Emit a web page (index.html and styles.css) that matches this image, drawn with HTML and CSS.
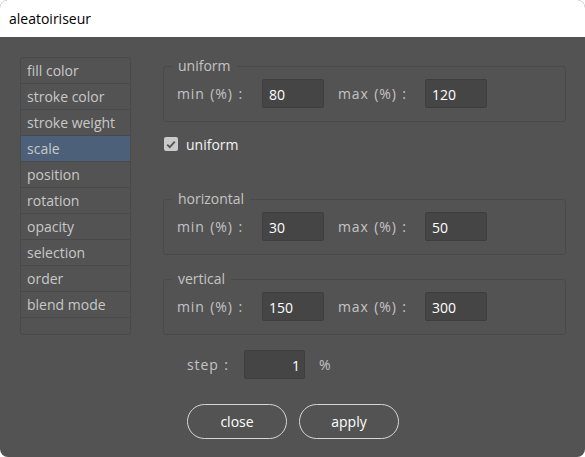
FILE: index.html
```html
<!DOCTYPE html>
<html>
<head>
<meta charset="utf-8">
<link rel="stylesheet" href="styles.css">
</head>
<body>
<div class="window">
  <div class="titlebar">aleatoiriseur</div>
  <div class="content">
    <div class="list">
      <div class="item">fill color</div>
      <div class="item">stroke color</div>
      <div class="item">stroke weight</div>
      <div class="item selected">scale</div>
      <div class="item">position</div>
      <div class="item">rotation</div>
      <div class="item">opacity</div>
      <div class="item">selection</div>
      <div class="item">order</div>
      <div class="item">blend mode</div>
    </div>
    <div class="panel">
      <fieldset class="group">
        <legend>uniform</legend>
        <div class="row">
          <span class="lbl lbl-min">min (%) :</span>
          <input class="field" type="text" value="80">
          <span class="lbl lbl-max">max (%) :</span>
          <input class="field" type="text" value="120">
        </div>
      </fieldset>
      <label class="check-row">
        <span class="checkbox"><svg width="10" height="9" viewBox="0 0 10 9"><path d="M1.2 4.6 L3.8 7.2 L8.8 1.6" fill="none" stroke="#555" stroke-width="1.8"/></svg></span>
        <span class="check-lbl">uniform</span>
      </label>
      <fieldset class="group group-h">
        <legend>horizontal</legend>
        <div class="row">
          <span class="lbl lbl-min">min (%) :</span>
          <input class="field" type="text" value="30">
          <span class="lbl lbl-max">max (%) :</span>
          <input class="field" type="text" value="50">
        </div>
      </fieldset>
      <fieldset class="group group-v">
        <legend>vertical</legend>
        <div class="row">
          <span class="lbl lbl-min">min (%) :</span>
          <input class="field" type="text" value="150">
          <span class="lbl lbl-max">max (%) :</span>
          <input class="field" type="text" value="300">
        </div>
      </fieldset>
      <div class="step-row">
        <span class="lbl lbl-step">step :</span>
        <input class="field field-step" type="text" value="1">
        <span class="lbl lbl-pct">%</span>
      </div>
      <div class="buttons">
        <button class="btn">close</button>
        <button class="btn">apply</button>
      </div>
    </div>
  </div>
</div>
</body>
</html>
```
FILE: styles.css
```css
html, body {
  margin: 0;
  padding: 0;
  background: #ffffff;
}
body {
  font-family: "Open Sans", "Noto Sans", sans-serif;
  font-size: 14px;
}
.window {
  width: 585px;
  height: 457px;
  background: #535353;
  border-radius: 8px;
  overflow: hidden;
  display: flex;
  flex-direction: column;
}
.titlebar {
  height: 37px;
  line-height: 37px;
  background: #ffffff;
  color: #000000;
  font-size: 14px;
  padding-left: 9px;
}
.content {
  display: flex;
  padding: 20px 19px 0 20px;
}
.list {
  width: 109px;
  height: 276px;
  border: 1px solid #4a4a4a;
  border-radius: 3px;
  flex: none;
}
.item {
  height: 25px;
  line-height: 25px;
  border-bottom: 1px solid #4a4a4a;
  padding-left: 6px;
  color: #c8c8c8;
  white-space: nowrap;
}
.item.selected {
  background: #4c6179;
}
.panel {
  margin-left: 32px;
  flex: 1;
  display: flex;
  flex-direction: column;
}
.group {
  margin: 0;
  border: 1px solid #4a4a4a;
  border-radius: 3px;
  padding: 0 0 13px 8px;
  min-width: 0;
}
.group legend {
  padding: 0 6px;
  line-height: 18px;
  color: #c4c4c4;
}
.group-h {
  margin-top: 36px;
}
.group-v {
  margin-top: 15px;
}
.row {
  display: flex;
  align-items: center;
  margin-top: 4px;
  padding-left: 5px;
}
.lbl {
  color: #c4c4c4;
  white-space: nowrap;
  word-spacing: 1px;
  letter-spacing: 0.9px;
}
.lbl-min {
  width: 85px;
}
.lbl-max {
  width: 87px;
  margin-left: 14px;
}
.field {
  box-sizing: border-box;
  width: 62px;
  height: 29px;
  margin: 0;
  background: #454545;
  border: 1px solid #3e3e3e;
  border-radius: 2px;
  color: #ffffff;
  font-family: inherit;
  font-size: 14px;
  padding: 2px 6px 0 6px;
  outline: none;
}
.check-row {
  display: flex;
  align-items: center;
  margin-top: 12px;
  height: 20px;
  padding-left: 1px;
}
.checkbox {
  box-sizing: border-box;
  width: 14px;
  height: 14px;
  background: #cacaca;
  border-radius: 2px;
  display: flex;
  align-items: center;
  justify-content: center;
}
.check-lbl {
  margin-left: 8px;
  color: #f2f2f2;
}
.step-row {
  display: flex;
  align-items: center;
  margin-top: 15px;
  padding-left: 24px;
}
.lbl-step {
  width: 57px;
}
.field-step {
  width: 61px;
  text-align: right;
  padding-right: 4px;
}
.lbl-pct {
  margin-left: 14px;
}
.buttons {
  display: flex;
  gap: 12px;
  margin-top: 25px;
  padding-left: 24px;
}
.btn {
  box-sizing: border-box;
  width: 100px;
  height: 35px;
  border: 1.5px solid #d6d6d6;
  border-radius: 18px;
  background: transparent;
  color: #ffffff;
  font-family: inherit;
  font-size: 14px;
  padding: 0;
}
```
